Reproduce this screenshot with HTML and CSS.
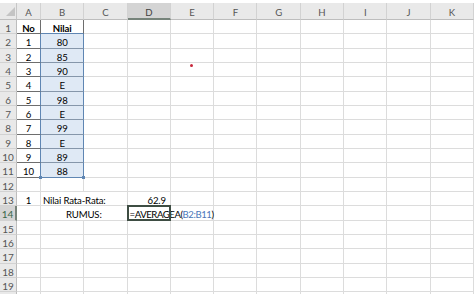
FILE: index.html
```html
<!DOCTYPE html>
<html lang="en">
<head>
    <meta charset="UTF-8">
    <title>Nilai Rata-Rata</title>
    <link rel="stylesheet" href="styles.css">
</head>
<body>
    <div class="sheet">
        <!-- column headers -->
        <div class="corner"><svg width="17" height="17" viewBox="0 0 17 17"><polygon points="15,4 15,13 6,13" fill="#c4c4c4"/></svg></div>
        <div class="h">A</div><div class="h">B</div><div class="h">C</div><div class="h sel">D</div><div class="h">E</div><div class="h">F</div><div class="h">G</div><div class="h">H</div><div class="h">I</div><div class="h">J</div><div class="h">K</div>

        <!-- data -->
        <div class="r">1</div><div class="c t ctr b">No</div><div class="c t top ctr b">Nilai</div><div class="c"></div><div class="c"></div><div class="c"></div><div class="c"></div><div class="c"></div><div class="c"></div><div class="c"></div><div class="c"></div><div class="c"></div>
        <div class="r">2</div><div class="c t a ctr">1</div><div class="c ref ctr">80</div><div class="c"></div><div class="c"></div><div class="c"></div><div class="c"></div><div class="c"></div><div class="c"></div><div class="c"></div><div class="c"></div><div class="c"></div>
        <div class="r">3</div><div class="c t a ctr">2</div><div class="c ref ctr">85</div><div class="c"></div><div class="c"></div><div class="c"></div><div class="c"></div><div class="c"></div><div class="c"></div><div class="c"></div><div class="c"></div><div class="c"></div>
        <div class="r">4</div><div class="c t a ctr">3</div><div class="c ref ctr">90</div><div class="c"></div><div class="c"></div><div class="c dotcell"><span class="dot"></span></div><div class="c"></div><div class="c"></div><div class="c"></div><div class="c"></div><div class="c"></div><div class="c"></div>
        <div class="r">5</div><div class="c t a ctr">4</div><div class="c ref ctr">E</div><div class="c"></div><div class="c"></div><div class="c"></div><div class="c"></div><div class="c"></div><div class="c"></div><div class="c"></div><div class="c"></div><div class="c"></div>
        <div class="r">6</div><div class="c t a ctr">5</div><div class="c ref ctr">98</div><div class="c"></div><div class="c"></div><div class="c"></div><div class="c"></div><div class="c"></div><div class="c"></div><div class="c"></div><div class="c"></div><div class="c"></div>
        <div class="r">7</div><div class="c t a ctr">6</div><div class="c ref ctr">E</div><div class="c"></div><div class="c"></div><div class="c"></div><div class="c"></div><div class="c"></div><div class="c"></div><div class="c"></div><div class="c"></div><div class="c"></div>
        <div class="r">8</div><div class="c t a ctr">7</div><div class="c ref ctr">99</div><div class="c"></div><div class="c"></div><div class="c"></div><div class="c"></div><div class="c"></div><div class="c"></div><div class="c"></div><div class="c"></div><div class="c"></div>
        <div class="r">9</div><div class="c t a ctr">8</div><div class="c ref ctr">E</div><div class="c"></div><div class="c"></div><div class="c"></div><div class="c"></div><div class="c"></div><div class="c"></div><div class="c"></div><div class="c"></div><div class="c"></div>
        <div class="r">10</div><div class="c t a ctr">9</div><div class="c ref ctr">89</div><div class="c"></div><div class="c"></div><div class="c"></div><div class="c"></div><div class="c"></div><div class="c"></div><div class="c"></div><div class="c"></div><div class="c"></div>
        <div class="r">11</div><div class="c t a ctr">10</div><div class="c ref last ctr">88</div><div class="c"></div><div class="c"></div><div class="c"></div><div class="c"></div><div class="c"></div><div class="c"></div><div class="c"></div><div class="c"></div><div class="c"></div>
        <div class="r">12</div><div class="c"></div><div class="c"></div><div class="c"></div><div class="c"></div><div class="c"></div><div class="c"></div><div class="c"></div><div class="c"></div><div class="c"></div><div class="c"></div><div class="c"></div>

        <!-- hasil -->
        <div class="r">13</div><div class="c ctr">1</div><div class="c span2 lf">Nilai Rata-Rata:</div><div class="c rt">62.9</div><div class="c"></div><div class="c"></div><div class="c"></div><div class="c"></div><div class="c"></div><div class="c"></div><div class="c"></div>
        <div class="r sel">14</div><div class="c"></div><div class="c span2 ctr">RUMUS:</div><div class="c active">=AVERAGEA(<span class="refText">B2:B11</span>)</div><div class="c"></div><div class="c"></div><div class="c"></div><div class="c"></div><div class="c"></div><div class="c"></div><div class="c"></div>

        <div class="r">15</div><div class="c"></div><div class="c"></div><div class="c"></div><div class="c"></div><div class="c"></div><div class="c"></div><div class="c"></div><div class="c"></div><div class="c"></div><div class="c"></div><div class="c"></div>
        <div class="r">16</div><div class="c"></div><div class="c"></div><div class="c"></div><div class="c"></div><div class="c"></div><div class="c"></div><div class="c"></div><div class="c"></div><div class="c"></div><div class="c"></div><div class="c"></div>
        <div class="r">17</div><div class="c"></div><div class="c"></div><div class="c"></div><div class="c"></div><div class="c"></div><div class="c"></div><div class="c"></div><div class="c"></div><div class="c"></div><div class="c"></div><div class="c"></div>
        <div class="r">18</div><div class="c"></div><div class="c"></div><div class="c"></div><div class="c"></div><div class="c"></div><div class="c"></div><div class="c"></div><div class="c"></div><div class="c"></div><div class="c"></div><div class="c"></div>
        <div class="r">19</div><div class="c"></div><div class="c"></div><div class="c"></div><div class="c"></div><div class="c"></div><div class="c"></div><div class="c"></div><div class="c"></div><div class="c"></div><div class="c"></div><div class="c"></div>
        <div class="r"></div><div class="c"></div><div class="c"></div><div class="c"></div><div class="c"></div><div class="c"></div><div class="c"></div><div class="c"></div><div class="c"></div><div class="c"></div><div class="c"></div><div class="c"></div>
    </div>
</body>
</html>
```

FILE: styles.css
```css
body {
    margin: 0;
    background: #fff;
    font-family: Lato, "Liberation Sans", sans-serif;
    overflow: hidden;
}

.sheet {
    display: grid;
    grid-template-columns: 17px 24px repeat(10, minmax(0, 1fr));
    grid-template-rows: 17px repeat(20, 14.33px);
    width: 474px;
    padding-top: 3px;
    font-size: 9.6px;
    letter-spacing: -0.15px;
    color: #000;
}

.sheet > div {
    box-sizing: border-box;
    min-width: 0;
    white-space: nowrap;
    line-height: 13px;
    padding-top: 2px;
}

/* headers */
.corner {
    background: #e9e9e9;
    border-right: 1px solid #c6c6c6;
    border-bottom: 1px solid #bdbdbd;
}

.sheet > .corner {
    padding-top: 0;
}

.corner svg {
    display: block;
}

.h {
    background: #e9e9e9;
    border-right: 1px solid #d2d2d2;
    border-bottom: 1px solid #bdbdbd;
    text-align: center;
    color: #555;
}

.sheet > .h {
    line-height: 14px;
    padding-top: 3px;
}

.h.sel {
    background: #d4d4d4;
    border-bottom: 2px solid #76837a;
    color: #3f3f3f;
}

.r {
    background: #e9e9e9;
    border-right: 1px solid #bdbdbd;
    border-bottom: 1px solid #d2d2d2;
    text-align: center;
    color: #555;
    font-size: 10px;
}

.r.sel {
    background: #d4d4d4;
    border-right: 2px solid #76837a;
    color: #38674a;
}

/* cells */
.c {
    border-right: 1px solid #dcdcdc;
    border-bottom: 1px solid #dcdcdc;
}

.ctr { text-align: center; }
.rt { text-align: right; padding-right: 4px; }
.lf { padding-left: 2px; }
.b { font-weight: bold; }
.span2 { grid-column: span 2; }

.t {
    border-right-color: #6e6e6e;
    border-bottom-color: #6e6e6e;
}

.t.top {
    border-bottom-color: #5f86b3;
}

.t.a {
    border-right-color: #5f86b3;
}

.ref {
    background: #dfe9f5;
    border-right-color: #5f86b3;
    border-bottom-color: #8596aa;
}

.ref.last {
    position: relative;
    border-bottom-color: #5f86b3;
}

.ref.last::before,
.ref.last::after {
    content: "";
    position: absolute;
    bottom: -2px;
    width: 3px;
    height: 3px;
    background: #5f86b3;
}

.ref.last::before { left: -2px; }
.ref.last::after { right: -2px; }

.active {
    position: relative;
    padding-left: 2px;
    letter-spacing: -0.45px;
}

.active::after {
    content: "";
    position: absolute;
    left: -1px;
    top: -1px;
    right: -1px;
    bottom: -1px;
    border: 2px solid #3e4d43;
}

.refText {
    color: #4a76b8;
}

.dotcell {
    position: relative;
}

.dot {
    position: absolute;
    left: 19px;
    top: 1px;
    width: 3px;
    height: 3px;
    border-radius: 50%;
    background: #c8283c;
}
```
